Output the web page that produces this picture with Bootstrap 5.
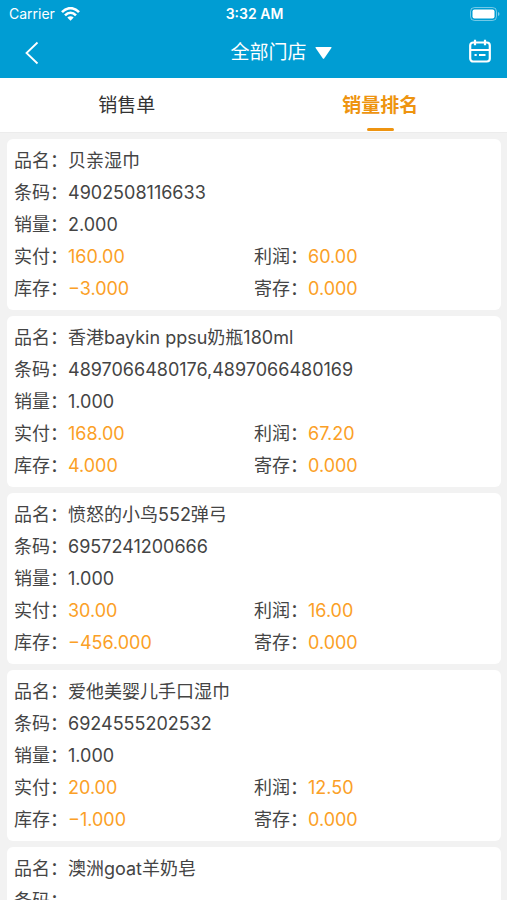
<!DOCTYPE html>
<html lang="zh-CN">
<head>
<meta charset="utf-8">
<meta name="viewport" content="width=device-width, initial-scale=1">
<title>销量排名</title>
<link href="https://cdn.jsdelivr.net/npm/bootstrap@5.3.0/dist/css/bootstrap.min.css" rel="stylesheet">
<style>
body { font-family: Inter, "Noto Sans CJK SC", sans-serif; font-size: 18px; line-height: 32px; color: #444; background: #f2f2f2; }
.app-top { background: #009dd3; color: #fff; }
.status { height: 28px; font-size: 14px; line-height: 28px; padding: 0 7px 0 9px; }
.carrier { gap: 6px; }
.clock { font-weight: 600; }
.titlebar { height: 50px; padding: 0 16px 0 24px; }
.titlebar button { color: #fff; }
.titlebar .store { font-size: 19px; line-height: 28px; margin-left: 54px; }
.tabs { height: 55px; border-bottom: 1px solid #ececec; }
.tabs button { font-size: 19px; line-height: 28px; color: #333; padding: 12px 0 0; }
.tabs button::after { content: ""; display: block; width: 27px; height: 3px; margin: 8px auto 0; border-radius: 2px; }
.tabs button.active { color: #ee9410; font-weight: 700; }
.tabs button.active::after { background: #ee9410; }
.list { padding: 6px; padding-left: 7px; gap: 6px; scrollbar-width: none; }
.list::-webkit-scrollbar { display: none; }
.item { border-radius: 6px; padding: 6px 7px 5px; }
.item dt, .item dd { font-weight: 400; margin: 0; white-space: nowrap; }
.money { color: #fba026; }
svg { display: block; }
</style>
<script src="https://cdn.jsdelivr.net/npm/bootstrap@5.3.0/dist/js/bootstrap.bundle.min.js"></script>
</head>
<body class="vh-100 d-flex flex-column overflow-hidden">
<header class="app-top flex-shrink-0">
  <div class="status row g-0">
    <div class="carrier col d-flex align-items-center"><span>Carrier</span>
      <svg width="19" height="14" viewBox="0 0 19 14" fill="none" stroke="#fff" stroke-width="2.6"><path d="M1 5.200C6-.2 13-.2 18 5.200M4 8.400c3.300-3.300 7.700-3.300 11 0"/><path d="M6.300 10.500c2-1.800 4.400-1.800 6.400 0l-3.200 3.200z" fill="#fff" stroke="none"/></svg>
    </div>
    <div class="col-auto clock">3:32 AM</div>
    <div class="col d-flex align-items-center justify-content-end">
      <svg width="30" height="14" viewBox="0 0 30 14"><rect x=".5" y=".5" width="26" height="13" rx="4" fill="none" stroke="#fff" stroke-opacity=".45"/><rect x="2.500" y="2.500" width="22" height="9" rx="2" fill="#fff"/><path d="M28 5c2 .8 2 3.200 0 4z" fill="#fff" fill-opacity=".5"/></svg>
    </div>
  </div>
  <div class="titlebar d-flex align-items-center justify-content-between">
    <button type="button" class="btn p-0 border-0" aria-label="返回"><svg width="15" height="24" viewBox="0 0 15 24" fill="none" stroke="#fff" stroke-width="1.800"><path d="M13.500 1.500 2.500 12l11 10.500"/></svg></button>
    <button type="button" class="btn p-0 border-0 store d-flex align-items-center gap-2">全部门店<svg width="17" height="12" viewBox="0 0 17 12"><path d="M1 0h15q1 0 .4 1L9.300 11.200q-.8 1-1.600 0L.6 1Q0 0 1 0z" fill="#fff"/></svg></button>
    <button type="button" class="btn p-0 border-0" aria-label="选择日期"><svg class="mb-1" width="22" height="24" viewBox="0 0 22 24" fill="none" stroke="#fff" stroke-width="2.200"><rect x="1.200" y="3.500" width="19.600" height="19" rx="3"/><path d="M1 11h20M6 .8v5.400M16 .8v5.400M5.500 16h2.200M10 16h6.500"/></svg></button>
  </div>
</header>
<nav class="tabs d-flex bg-white flex-shrink-0">
  <button type="button" class="btn border-0 rounded-0 w-50">销售单</button>
  <button type="button" class="btn border-0 rounded-0 w-50 active bg-white" aria-current="page">销量排名</button>
</nav>
<main class="list d-flex flex-column flex-fill overflow-auto">
  <dl class="item bg-white row g-0 m-0">
    <div class="col-12 d-flex"><dt>品名：</dt><dd>贝亲湿巾</dd></div>
    <div class="col-12 d-flex"><dt>条码：</dt><dd>4902508116633</dd></div>
    <div class="col-12 d-flex"><dt>销量：</dt><dd>2.000</dd></div>
    <div class="col-6 d-flex"><dt>实付：</dt><dd class="money">160.00</dd></div>
    <div class="col-6 d-flex"><dt>利润：</dt><dd class="money">60.00</dd></div>
    <div class="col-6 d-flex"><dt>库存：</dt><dd class="money">−3.000</dd></div>
    <div class="col-6 d-flex"><dt>寄存：</dt><dd class="money">0.000</dd></div>
  </dl>
  <dl class="item bg-white row g-0 m-0">
    <div class="col-12 d-flex"><dt>品名：</dt><dd>香港baykin ppsu奶瓶180ml</dd></div>
    <div class="col-12 d-flex"><dt>条码：</dt><dd>4897066480176,4897066480169</dd></div>
    <div class="col-12 d-flex"><dt>销量：</dt><dd>1.000</dd></div>
    <div class="col-6 d-flex"><dt>实付：</dt><dd class="money">168.00</dd></div>
    <div class="col-6 d-flex"><dt>利润：</dt><dd class="money">67.20</dd></div>
    <div class="col-6 d-flex"><dt>库存：</dt><dd class="money">4.000</dd></div>
    <div class="col-6 d-flex"><dt>寄存：</dt><dd class="money">0.000</dd></div>
  </dl>
  <dl class="item bg-white row g-0 m-0">
    <div class="col-12 d-flex"><dt>品名：</dt><dd>愤怒的小鸟552弹弓</dd></div>
    <div class="col-12 d-flex"><dt>条码：</dt><dd>6957241200666</dd></div>
    <div class="col-12 d-flex"><dt>销量：</dt><dd>1.000</dd></div>
    <div class="col-6 d-flex"><dt>实付：</dt><dd class="money">30.00</dd></div>
    <div class="col-6 d-flex"><dt>利润：</dt><dd class="money">16.00</dd></div>
    <div class="col-6 d-flex"><dt>库存：</dt><dd class="money">−456.000</dd></div>
    <div class="col-6 d-flex"><dt>寄存：</dt><dd class="money">0.000</dd></div>
  </dl>
  <dl class="item bg-white row g-0 m-0">
    <div class="col-12 d-flex"><dt>品名：</dt><dd>爱他美婴儿手口湿巾</dd></div>
    <div class="col-12 d-flex"><dt>条码：</dt><dd>6924555202532</dd></div>
    <div class="col-12 d-flex"><dt>销量：</dt><dd>1.000</dd></div>
    <div class="col-6 d-flex"><dt>实付：</dt><dd class="money">20.00</dd></div>
    <div class="col-6 d-flex"><dt>利润：</dt><dd class="money">12.50</dd></div>
    <div class="col-6 d-flex"><dt>库存：</dt><dd class="money">−1.000</dd></div>
    <div class="col-6 d-flex"><dt>寄存：</dt><dd class="money">0.000</dd></div>
  </dl>
  <dl class="item bg-white row g-0 m-0">
    <div class="col-12 d-flex"><dt>品名：</dt><dd>澳洲goat羊奶皂</dd></div>
    <div class="col-12 d-flex"><dt>条码：</dt><dd></dd></div>
  </dl>
</main>
</body>
</html>
